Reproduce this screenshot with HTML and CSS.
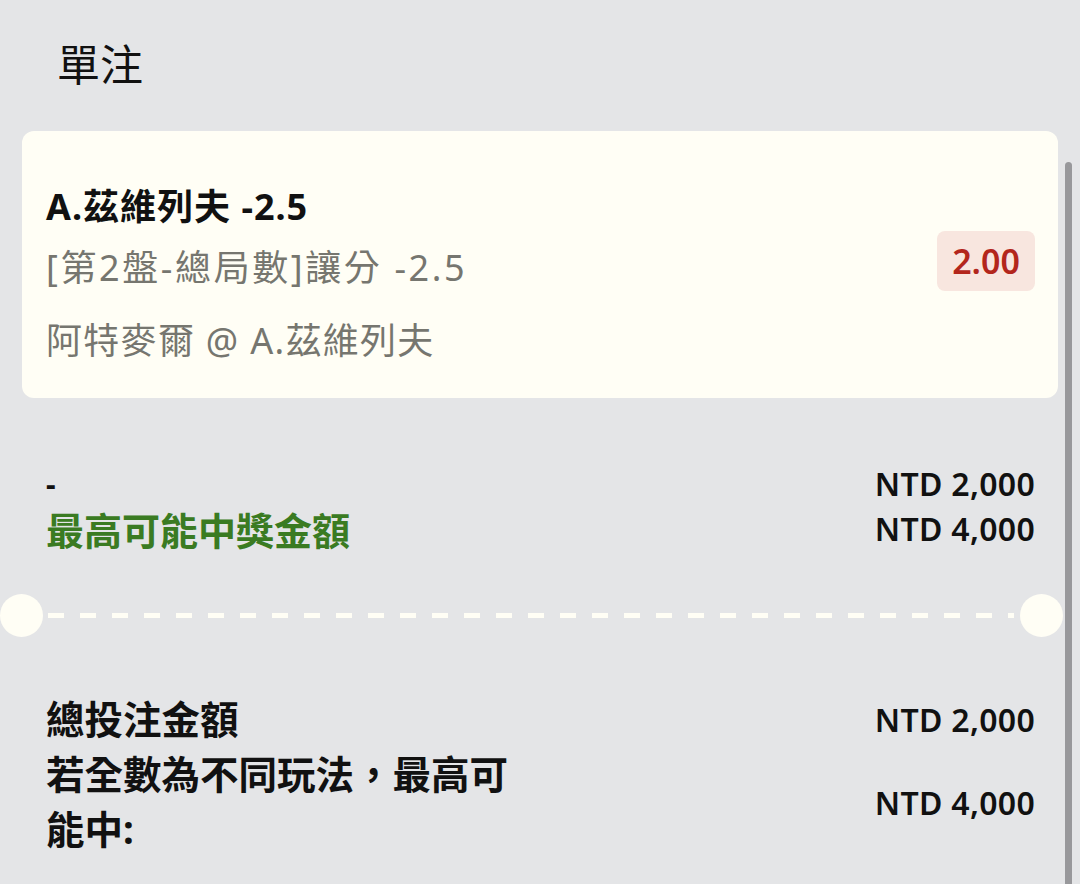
FILE: index.html
```html
<!DOCTYPE html>
<html>
<head>
    <title>單注</title>
    <link rel="stylesheet" href="styles.css">
</head>
<body>
    <div class="slip">
        <h1 class="slip-title">單注</h1>

        <!-- selection card -->
        <div class="bet-card">
            <div class="bet-info">
                <div class="bet-name">A.茲維列夫 -2.5</div>
                <div class="bet-market">[第2盤-總局數]讓分 -2.5</div>
                <div class="bet-match">阿特麥爾 @ A.茲維列夫</div>
            </div>
            <div class="odds">2.00</div>
        </div>

        <div class="stake">
            <div class="row">
                <span class="stake-input">-</span>
                <span class="amount">NTD 2,000</span>
            </div>
            <div class="row">
                <span class="win-label">最高可能中獎金額</span>
                <span class="amount">NTD 4,000</span>
            </div>
        </div>

        <div class="ticket-cut">
            <span class="notch"></span>
            <span class="dashes"></span>
            <span class="notch"></span>
        </div>

        <div class="summary">
            <div class="sum-row">
                <span class="sum-label">總投注金額</span>
                <span class="amount">NTD 2,000</span>
            </div>
            <div class="sum-row">
                <span class="sum-label wrap">若全數為不同玩法，最高可能中:</span>
                <span class="amount">NTD 4,000</span>
            </div>
        </div>
    </div>

    <!-- overlay scrollbar thumb -->
    <div class="scroll-thumb"></div>
</body>
</html>
```

FILE: styles.css
```css
body {
    margin: 0;
    background-color: #e4e5e7;
    font-family: "Noto Sans", "Noto Sans CJK TC", sans-serif;
    color: #111;
    overflow: hidden;
}

.slip {
    width: 1080px;
}

.slip-title {
    margin: 0;
    padding: 35px 0 0 57px;
    font-size: 43px;
    font-weight: normal;
    line-height: 60px;
}

.bet-card {
    margin: 36px 22px 0;
    padding: 48px 23px 29px 24px;
    background-color: #fffef5;
    border-radius: 12px;
    display: flex;
    align-items: flex-start;
    justify-content: space-between;
}

.bet-name {
    font-size: 36px;
    font-weight: bold;
    line-height: 56px;
    letter-spacing: 1px;
}

.bet-market {
    margin-top: 5px;
    font-size: 36px;
    line-height: 56px;
    color: #76766f;
    letter-spacing: 2.6px;
}

.bet-match {
    margin-top: 17px;
    font-size: 36px;
    line-height: 56px;
    color: #76766f;
    letter-spacing: 1.3px;
}

.odds {
    margin-top: 52px;
    width: 98px;
    height: 60px;
    border-radius: 8px;
    background-color: #f8e6df;
    color: #b3261c;
    font-size: 34px;
    font-weight: 600;
    line-height: 60px;
    text-align: center;
}

.stake {
    margin-top: 63px;
    padding: 0 45px 0 46px;
}

.row {
    display: flex;
    justify-content: space-between;
    align-items: center;
    height: 45px;
}

.stake-input {
    font-size: 30px;
    font-weight: bold;
}

.win-label {
    font-size: 38px;
    font-weight: bold;
    color: #3a7b22;
}

.amount {
    font-size: 32px;
    font-weight: 600;
    letter-spacing: 0.3px;
    white-space: nowrap;
}

.ticket-cut {
    margin-top: 43px;
    width: 1063px;
    display: flex;
    align-items: center;
}

.notch {
    width: 43px;
    height: 43px;
    border-radius: 50%;
    background-color: #fffef5;
    flex-shrink: 0;
}

.dashes {
    flex: 1;
    height: 5px;
    margin: 0 6px 0 5px;
    background: repeating-linear-gradient(to right, #fffef5 0 16px, transparent 16px 32px);
}

.summary {
    margin-top: 55px;
    padding: 0 45px 0 46px;
}

.sum-row {
    display: flex;
    justify-content: space-between;
    align-items: center;
}

.sum-label {
    font-size: 38.5px;
    font-weight: bold;
    line-height: 55px;
}

.sum-label.wrap {
    width: 480px;
}

.scroll-thumb {
    position: fixed;
    top: 162px;
    right: 8px;
    bottom: 0;
    width: 7px;
    border-radius: 4px 4px 0 0;
    background-color: #98989b;
}
```
